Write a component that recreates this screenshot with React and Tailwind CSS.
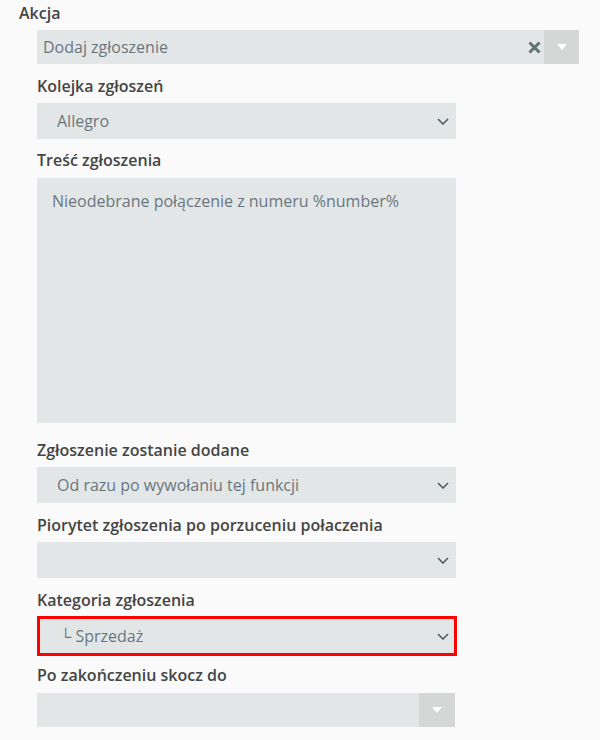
import React from 'react'

const labelCls = "h-[20px] leading-[20px] text-[16px] font-semibold text-[#454545]"

function Chevron() {
  return (
    <svg width="12" height="7" viewBox="0 0 12 7" fill="none" className="shrink-0">
      <path d="M1 1l5 5 5-5" stroke="#4f5f68" strokeWidth="1.6" />
    </svg>
  )
}

function Caret() {
  return (
    <svg width="10" height="6" viewBox="0 0 10 6" className="shrink-0">
      <path d="M0 0h10L5 6z" fill="#ffffff" />
    </svg>
  )
}

function NativeSelect({ value, className = "" }) {
  return (
    <div className={"flex items-center w-[419px] h-[36px] bg-[#e3e6e7] pl-[20px] pr-[7px] " + className}>
      <span className="flex-1 text-[16px] text-[#6a767e] truncate">{value}</span>
      <Chevron />
    </div>
  )
}

export default function App() {
  return (
    <div className="min-h-screen bg-[#fafafa] font-['Open_Sans',sans-serif] pl-[19px] pt-[3px]">
      <div className={labelCls}>Akcja</div>
      <div className="ml-[18px] mt-[7px] flex w-[542px] h-[34px]">
        <div className="flex-1 flex items-center bg-[#e3e6e7] pl-[6px] pr-[3px]">
          <span className="flex-1 text-[16px] text-[#6a767e]">Dodaj zgłoszenie</span>
          <svg width="13" height="13" viewBox="0 0 13 13" className="shrink-0">
            <path d="M1.5 1.5l10 10M11.5 1.5l-10 10" stroke="#5f727a" strokeWidth="3" />
          </svg>
        </div>
        <div className="w-[35px] flex items-center justify-center bg-[#d5d6d6]">
          <Caret />
        </div>
      </div>

      <div className="ml-[18px]">
        <div className={labelCls + " mt-[12px]"}>Kolejka zgłoszeń</div>
        <NativeSelect value="Allegro" className="mt-[7px]" />

        <div className={labelCls + " mt-[11px]"}>Treść zgłoszenia</div>
        <div className="mt-[8px] w-[419px] h-[245px] bg-[#e3e6e7] pl-[15px] pt-[12px] text-[16px] leading-[22px] text-[#6a767e]">
          Nieodebrane połączenie z numeru %number%
        </div>

        <div className={labelCls + " mt-[17px]"}>Zgłoszenie zostanie dodane</div>
        <NativeSelect value="Od razu po wywołaniu tej funkcji" className="mt-[7px]" />

        <div className={labelCls + " mt-[12px]"}>Piorytet zgłoszenia po porzuceniu połaczenia</div>
        <NativeSelect value="" className="mt-[7px]" />

        <div className={labelCls + " mt-[12px]"}>Kategoria zgłoszenia</div>
        <div className="mt-[6px] flex items-center w-[420px] h-[40px] bg-[#e3e6e7] border-[3px] border-[#ff0000] pl-[20px] pr-[5px]">
          <span className="flex-1 text-[16px] text-[#6a767e]">└ Sprzedaż</span>
          <Chevron />
        </div>

        <div className={labelCls + " mt-[9px]"}>Po zakończeniu skocz do</div>
        <div className="mt-[8px] flex w-[418px] h-[34px]">
          <div className="flex-1 bg-[#e3e6e7]" />
          <div className="w-[36px] flex items-center justify-center bg-[#d5d6d6]">
            <Caret />
          </div>
        </div>
      </div>
    </div>
  )
}
